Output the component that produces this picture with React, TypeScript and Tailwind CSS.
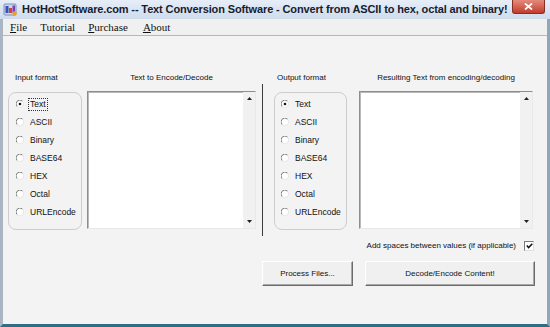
import React from "react";

const sans = { fontFamily: '"Liberation Sans", Arial, sans-serif' };

function Radio({ checked }: { checked?: boolean }) {
  return (
    <svg width="8" height="8" viewBox="0 0 8 8" className="shrink-0">
      <circle cx="4" cy="4" r="3.5" fill="#ffffff" />
      <path d="M1.2 6.6 A3.5 3.5 0 0 1 6.6 1.2" stroke="#7a7a7a" strokeWidth="1" fill="none" />
      <path d="M6.6 1.2 A3.5 3.5 0 0 1 1.2 6.6" stroke="#e4e4e4" strokeWidth="1" fill="none" />
      {checked && <circle cx="4" cy="4" r="1.3" fill="#111" />}
    </svg>
  );
}

function RadioGroup({ focus, textPad, padL }: { focus?: boolean; textPad: string; padL: string }) {
  const items = ["Text", "ASCII", "Binary", "BASE64", "HEX", "Octal", "URLEncode"];
  return (
    <div className="h-[138px] rounded-[8px] border border-[#cdcdcd] pt-[2px]">
      {items.map((it, i) => (
        <div key={it} className={`flex h-[18px] items-center ${padL}`}>
          <Radio checked={i === 0} />
          <span
            className={`${textPad} -ml-[1px] px-[1px] text-[8.5px] leading-[11px] text-[#111] ${
              i === 0 && focus ? "border border-dotted border-[#333]" : "border border-transparent"
            }`}
          >
            {it}
          </span>
        </div>
      ))}
    </div>
  );
}

function TextBox({ w }: { w: string }) {
  return (
    <div className={`${w} flex h-[138px] border border-t-[#8d8d8d] border-l-[#8d8d8d] border-r-[#e9e9e9] border-b-[#e9e9e9] bg-white`}>
      <div className="flex-1 border-t border-l border-[#b9b9b9] border-r-0 border-b-0" />
      <div className="flex w-[12px] flex-col items-center justify-between bg-[#f1f1f1] py-[5px]">
        <svg width="5" height="3" viewBox="0 0 5 3">
          <path d="M0 3 L2.5 0 L5 3 Z" fill="#222" />
        </svg>
        <svg width="5" height="3" viewBox="0 0 5 3">
          <path d="M0 0 L2.5 3 L5 0 Z" fill="#222" />
        </svg>
      </div>
    </div>
  );
}

function Btn({ w, label }: { w: string; label: string }) {
  return (
    <div
      className={`${w} flex h-[25px] items-center justify-center border border-t-[#ffffff] border-l-[#ffffff] border-r-[#6b6b6b] border-b-[#6b6b6b] bg-[#f0f0f0] text-[8px] text-[#111] shadow-[inset_-1px_-1px_0_#a8a8a8]`}
    >
      {label}
    </div>
  );
}

export default function App() {
  return (
    <div className="flex h-[327px] w-[550px] flex-col overflow-hidden bg-[#f3f3f3]" style={sans}>
      {/* Title bar */}
      <div className="flex h-[19px] items-start bg-gradient-to-b from-[#e6eef8] to-[#cfdcec] pl-[3px]">
        <svg width="15" height="15" viewBox="0 0 15 15" className="mt-[2px] shrink-0">
          <rect x="1" y="2" width="12" height="11" rx="1" fill="#c9d7ee" stroke="#6b7fa8" strokeWidth="0.8" />
          <rect x="2.5" y="4" width="3" height="7" fill="#3b4fb8" />
          <rect x="6" y="6" width="3" height="5" fill="#d9402f" />
          <rect x="9.5" y="3.5" width="2.5" height="7.5" fill="#7d3fb0" />
          <circle cx="11.5" cy="11.5" r="2.2" fill="#f0a020" />
        </svg>
        <span className="ml-[4px] mt-[3px] whitespace-nowrap text-[11px] font-bold leading-[12px] tracking-[-0.13px] text-[#16202e]">
          HotHotSoftware.com -- Text Conversion Software - Convert from ASCII to hex, octal and binary!
        </span>
        <div className="flex-1" />
        <div className="mr-[5px] flex h-[14px] w-[33px] shrink-0 items-center justify-center rounded-b-[3px] border border-t-0 border-[#8a2e24] bg-gradient-to-b from-[#e48a7c] to-[#c13a2a]">
          <svg width="9" height="7" viewBox="0 0 9 7">
            <path d="M1 0.5 L8 6.5 M8 0.5 L1 6.5" stroke="#fff" strokeWidth="1.8" />
          </svg>
        </div>
      </div>

      {/* Frame */}
      <div className="flex flex-1 flex-col border-x-[3px] border-b-[3px] border-l-[#a9b5c2] border-r-[#8fa6bb] border-b-[#2f6d86]">
        {/* Menu */}
        <div
          className="flex h-[17px] items-center border-b border-[#b8b8b8] bg-[#f0f0f0] text-[11px] text-[#111]"
          style={{ fontFamily: '"Liberation Serif", "Times New Roman", serif' }}
        >
          <span className="ml-[7px]"><span className="underline">F</span>ile</span>
          <span className="ml-[13px]">Tutorial</span>
          <span className="ml-[13px]"><span className="underline">P</span>urchase</span>
          <span className="ml-[15px]"><span className="underline">A</span>bout</span>
        </div>

        {/* Content */}
        <div className="flex flex-1 flex-col">
          <div className="flex items-start">
            {/* input group */}
            <div className="ml-[5px] mt-[36px] flex w-[74px] flex-col">
              <div className="h-[12px] pl-[7px] text-[8px] leading-[12px] text-[#111]">Input format</div>
              <div className="mt-[8px]">
                <RadioGroup focus textPad="ml-[4px]" padL="pl-[7px]" />
              </div>
            </div>
            {/* input text */}
            <div className="ml-[5px] mt-[36px] flex w-[169px] flex-col">
              <div className="h-[12px] text-center text-[8px] leading-[12px] text-[#111]">Text to Encode/Decode</div>
              <div className="mt-[7px]">
                <TextBox w="w-[169px]" />
              </div>
            </div>
            {/* separator */}
            <div className="ml-[6px] mt-[48px] h-[152px] w-[1px] bg-[#3a3a3a]" />
            {/* output group */}
            <div className="ml-[11px] mt-[36px] flex w-[73px] flex-col">
              <div className="h-[12px] pl-[3px] text-[8px] leading-[12px] text-[#111]">Output format</div>
              <div className="mt-[8px]">
                <RadioGroup textPad="ml-[4px]" padL="pl-[6px]" />
              </div>
            </div>
            {/* output text */}
            <div className="ml-[12px] mt-[36px] flex w-[174px] flex-col">
              <div className="h-[12px] text-center text-[8px] leading-[12px] text-[#111]">
                Resulting Text from encoding/decoding
              </div>
              <div className="mt-[7px]">
                <TextBox w="w-[174px]" />
              </div>
            </div>
          </div>

          {/* checkbox row */}
          <div className="mt-[4px] flex items-center justify-end pr-[13px]">
            <span className="text-[8px] leading-[12px] text-[#111]">Add spaces between values (if applicable)</span>
            <div className="ml-[8px] flex h-[10px] w-[10px] items-center justify-center border border-t-[#7a7a7a] border-l-[#7a7a7a] border-r-[#e0e0e0] border-b-[#e0e0e0] bg-white">
              <svg width="7" height="6" viewBox="0 0 7 6">
                <path d="M0.8 2.6 L2.6 4.6 L6.3 0.8" stroke="#111" strokeWidth="1.5" fill="none" />
              </svg>
            </div>
          </div>

          {/* buttons */}
          <div className="ml-[259px] mt-[9px] flex gap-[12px]">
            <Btn w="w-[91px]" label="Process Files..." />
            <Btn w="w-[170px]" label="Decode/Encode Content!" />
          </div>
        </div>
      </div>
    </div>
  );
}
